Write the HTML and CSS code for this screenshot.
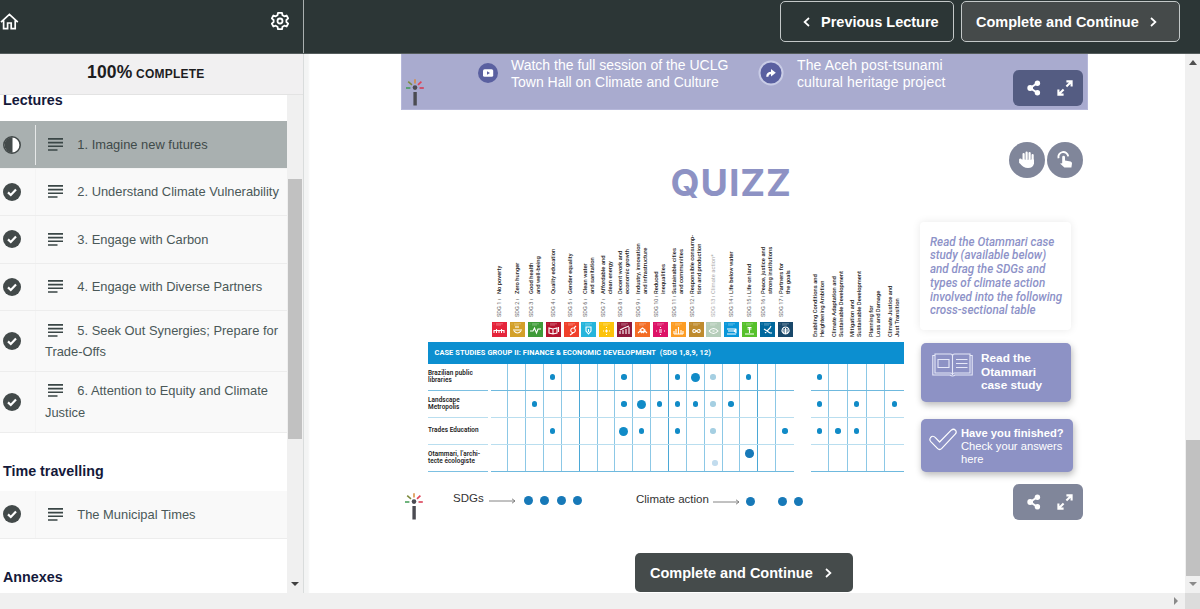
FILE: index.html
```html
<!DOCTYPE html>
<html lang="en">
<head>
    <meta charset="UTF-8">
    <meta name="viewport" content="width=device-width, initial-scale=1.0">
    <title>Imagine new futures</title>
    <link rel="stylesheet" href="styles.css">
</head>
<body>
    <!-- Shared icon shapes -->
    <svg class="icon-defs" width="0" height="0">
        <symbol id="icon-check" viewBox="0 0 18 18">
            <circle cx="9" cy="9" r="9" fill="#434a4a"/>
            <path d="M5 9.4 L7.8 12 L13 6.6" fill="none" stroke="#fff" stroke-width="2.2"/>
        </symbol>
        <symbol id="icon-half" viewBox="0 0 18 18">
            <circle cx="9" cy="9" r="8.2" fill="#fff" stroke="#434a4a" stroke-width="1.6"/>
            <path d="M9.5 1 A8 8 0 0 0 9.5 17 Z" fill="#434a4a"/>
        </symbol>
        <symbol id="icon-lines" viewBox="0 0 15 13">
            <path d="M0 .9H15M0 4.6H15M0 8.3H15M0 12H9.5" stroke="#3a4646" stroke-width="1.6"/>
        </symbol>
        <symbol id="icon-share" viewBox="0 0 14 16">
            <path d="M10.5 3 L3.2 8 L10.5 13" fill="none" stroke="#fff" stroke-width="2"/>
            <circle cx="10.4" cy="3.2" r="2.7" fill="#fff"/>
            <circle cx="3.2" cy="8" r="2.9" fill="#fff"/>
            <circle cx="10.4" cy="12.8" r="2.7" fill="#fff"/>
        </symbol>
        <symbol id="icon-expand" viewBox="0 0 16 16">
            <path d="M9.4 1.4H14.6V6.6M14.2 1.8L9.4 6.6M1.4 9.4V14.6H6.6M1.8 14.2L6.6 9.4" fill="none" stroke="#fff" stroke-width="2.1"/>
        </symbol>
        <symbol id="icon-wand" viewBox="0 0 18 27">
            <rect x="7.4" y="13" width="3.4" height="13.5" fill="#4b4b52"/>
            <circle cx="9" cy="8.6" r="2.3" fill="#4b4b52"/>
            <path d="M0 9H4.4" stroke="#3f9b52" stroke-width="1.5"/>
            <path d="M2.2 2.6L6 5.9" stroke="#7d8a3c" stroke-width="1.5"/>
            <path d="M9 .3V4.6" stroke="#d98a3a" stroke-width="1.5"/>
            <path d="M15.4 2.6L12 5.9" stroke="#e0455a" stroke-width="1.7"/>
            <path d="M13.5 9H17.8" stroke="#d8344c" stroke-width="1.5"/>
        </symbol>
        <symbol id="icon-arrow" viewBox="0 0 27 6">
            <path d="M0 3H26M23 .8L26 3L23 5.2" fill="none" stroke="#777" stroke-width=".9"/>
        </symbol>
        <symbol id="icon-next" viewBox="0 0 7 10">
            <path d="M1 1L5.4 5L1 9" fill="none" stroke="#fff" stroke-width="1.7"/>
        </symbol>
    </svg>

    <!-- Top bar -->
    <header class="topbar">
        <div class="topbar-tools">
            <svg width="19" height="17" viewBox="0 0 19 17" fill="none" stroke="#fff" stroke-width="1.7">
                <path d="M1 9.2L9.4 1.4L17.8 9.2M3.6 7.4V15.6H7.6V10H11.2V15.6H15.2V7.4"/>
            </svg>
            <svg width="18" height="20" viewBox="0 0 18 20" fill="none" stroke="#fff" stroke-width="1.8" stroke-linejoin="round">
                <path d="M7 1.8H11L11.5 4.3L13.3 5.3L15.6 4.5L17.2 7.4L15.4 9V11L17.2 12.6L15.6 15.5L13.3 14.7L11.5 15.7L11 18.2H7L6.5 15.7L4.7 14.7L2.4 15.5L.8 12.6L2.6 11V9L.8 7.4L2.4 4.5L4.7 5.3L6.5 4.3Z"/>
                <circle cx="9" cy="10" r="2.5"/>
            </svg>
        </div>
        <nav class="topbar-nav">
            <a class="nav-button"><svg class="flip" width="7" height="10"><use href="#icon-next"/></svg>Previous Lecture</a>
            <a class="nav-button nav-button-main">Complete and Continue<svg width="7" height="10"><use href="#icon-next"/></svg></a>
        </nav>
    </header>

    <div class="page">
        <!-- Course outline -->
        <aside class="sidebar">
            <div class="progress"><span class="progress-value">100%</span> COMPLETE</div>
            <div class="outline">
                <div class="sections">
                    <h2>Lectures</h2>
                    <ul>
                        <li class="lecture active">
                            <span class="status"><svg width="18" height="18"><use href="#icon-half"/></svg></span>
                            <span class="name"><svg class="lines" width="15" height="13"><use href="#icon-lines"/></svg>1. Imagine new futures</span>
                        </li>
                        <li class="lecture">
                            <span class="status"><svg width="18" height="18"><use href="#icon-check"/></svg></span>
                            <span class="name"><svg class="lines" width="15" height="13"><use href="#icon-lines"/></svg>2. Understand Climate Vulnerability</span>
                        </li>
                        <li class="lecture">
                            <span class="status"><svg width="18" height="18"><use href="#icon-check"/></svg></span>
                            <span class="name"><svg class="lines" width="15" height="13"><use href="#icon-lines"/></svg>3. Engage with Carbon</span>
                        </li>
                        <li class="lecture">
                            <span class="status"><svg width="18" height="18"><use href="#icon-check"/></svg></span>
                            <span class="name"><svg class="lines" width="15" height="13"><use href="#icon-lines"/></svg>4. Engage with Diverse Partners</span>
                        </li>
                        <li class="lecture tall">
                            <span class="status"><svg width="18" height="18"><use href="#icon-check"/></svg></span>
                            <span class="name"><svg class="lines" width="15" height="13"><use href="#icon-lines"/></svg>5. Seek Out Synergies; Prepare for<br>Trade-Offs</span>
                        </li>
                        <li class="lecture tall">
                            <span class="status"><svg width="18" height="18"><use href="#icon-check"/></svg></span>
                            <span class="name"><svg class="lines" width="15" height="13"><use href="#icon-lines"/></svg>6. Attention to Equity and Climate<br>Justice</span>
                        </li>
                    </ul>
                    <h2>Time travelling</h2>
                    <ul>
                        <li class="lecture">
                            <span class="status"><svg width="18" height="18"><use href="#icon-check"/></svg></span>
                            <span class="name"><svg class="lines" width="15" height="13"><use href="#icon-lines"/></svg>The Municipal Times</span>
                        </li>
                    </ul>
                    <h2>Annexes</h2>
                </div>
                <div class="scrollbar outline-scroll">
                    <div class="thumb"></div>
                    <div class="arrow-down dark"></div>
                </div>
            </div>
        </aside>

        <!-- Lecture content -->
        <main class="content">
            <section class="banner">
                <svg class="banner-wand" width="18" height="27"><use href="#icon-wand"/></svg>
                <a class="banner-link video">
                    <svg width="20" height="20" viewBox="0 0 20 20">
                        <circle cx="10" cy="10" r="10" fill="#5a60a0"/>
                        <rect x="5" y="6.2" width="10.2" height="7.6" rx="1.6" fill="#fff"/>
                        <path d="M9 8.3L12 10L9 11.7Z" fill="#5a60a0"/>
                    </svg>
                    <span>Watch the full session of the UCLG<br>Town Hall on Climate and Culture</span>
                </a>
                <a class="banner-link project">
                    <svg width="26" height="26" viewBox="0 0 26 26">
                        <circle cx="13" cy="13" r="11.5" fill="#5a60a0" stroke="#c9cce6" stroke-width="2"/>
                        <path d="M9.3 16.8C9.3 13.5 11 12.8 13.6 12.8" fill="none" stroke="#fff" stroke-width="2.2"/>
                        <path d="M13 9L17.8 12.8L13 16.4Z" fill="#fff"/>
                    </svg>
                    <span>The Aceh post-tsunami<br>cultural heritage project</span>
                </a>
                <div class="toolbar toolbar-blue">
                    <svg width="14" height="16"><use href="#icon-share"/></svg>
                    <svg width="16" height="16"><use href="#icon-expand"/></svg>
                </div>
            </section>

            <section class="quiz">
                <div class="hints">
                    <span class="hint">
                        <svg width="16" height="18" viewBox="0 0 16 18" fill="none" stroke="#fff" stroke-width="2.2" stroke-linecap="round">
                            <path d="M4.6 9V3M7.6 8V1.6M10.6 8V2M13.6 9V4"/>
                            <path d="M1.4 8.6V11.2" stroke-width="2.4"/>
                            <path d="M.4 8.5H15V12.5Q14 17 9 17Q4 17 .6 12Z" fill="#fff" stroke="none"/>
                        </svg>
                    </span>
                    <span class="hint">
                        <svg width="16" height="18" viewBox="0 0 16 18">
                            <path d="M1.6 7.2A4.9 4.9 0 1 1 11.2 5.4" fill="none" stroke="#fff" stroke-width="1.9"/>
                            <path d="M5.2 6.2A1.4 1.4 0 0 1 8 6.2V9.6L13.6 10.6Q15 11 15 12.4L14.4 16.6H7.4L3 12.6L5.2 12.2Z" fill="#fff"/>
                        </svg>
                    </span>
                </div>
                <h1>QUIZZ</h1>

                <div class="quiz-body">
                    <div class="chart">
                        <div class="chart-head">
                            <div class="goals" id="goals"></div>
                            <div class="actions" id="actions"></div>
                        </div>
                        <div class="chart-title">CASE STUDIES GROUP II: FINANCE &amp; ECONOMIC DEVELOPMENT&nbsp; (SDG 1,8,9, 12)</div>
                        <div class="chart-rows" id="rows"></div>
                    </div>

                    <div class="cards">
                        <div class="note"><p>Read the Otammari case<br>study (available below)<br>and drag the SDGs and<br>types of climate action<br>involved into the following<br>cross-sectional table</p></div>
                        <a class="card card-read">
                            <svg width="41" height="24" viewBox="0 0 41 24" fill="none" stroke="#e6e8f8" stroke-width="1.1">
                                <path d="M3 2.5H.8V22H18Q20.5 24 23 22H40.2V2.5H38"/>
                                <path d="M3 1H18.5Q20.5 1 20.5 3Q20.5 1 22.5 1H38V20H22.5Q20.5 20 20.5 22Q20.5 20 18.5 20H3ZM20.5 3V21"/>
                                <path d="M6 6.5H17V14.5H6ZM24 6.5H35.5M24 10.5H35.5M24 14.5H35.5"/>
                            </svg>
                            <span>Read the<br>Otammari<br>case study</span>
                        </a>
                        <a class="card card-check">
                            <svg width="28" height="23" viewBox="0 0 28 23" fill="none" stroke="#fff" stroke-width="1.2" stroke-linejoin="round">
                                <path d="M1.6 9.5Q3.8 7 6.4 9.6L10.6 14L22.2 2.2Q24.6 .2 26.6 2.4Q28 4.4 26.2 6.2L12.8 20.4Q10.6 22.6 8.4 20.4L1.8 13.6Q0 11.6 1.6 9.5Z"/>
                            </svg>
                            <span><b>Have you finished?</b><br>Check your answers<br>here</span>
                        </a>
                    </div>
                </div>

                <div class="legend">
                    <svg class="legend-wand" width="18" height="27"><use href="#icon-wand"/></svg>
                    <div class="legend-group sdgs">
                        <span class="legend-name">SDGs</span>
                        <svg width="27" height="6"><use href="#icon-arrow"/></svg>
                        <div class="answers">
                            <i class="answer"></i><i class="answer"></i><i class="answer"></i><i class="answer"></i>
                        </div>
                    </div>
                    <div class="legend-group climate">
                        <span class="legend-name">Climate action</span>
                        <svg width="27" height="6"><use href="#icon-arrow"/></svg>
                        <div class="answers">
                            <i class="answer"></i><i class="answer far"></i><i class="answer"></i>
                        </div>
                    </div>
                    <div class="toolbar">
                        <svg width="14" height="16"><use href="#icon-share"/></svg>
                        <svg width="16" height="16"><use href="#icon-expand"/></svg>
                    </div>
                </div>
            </section>

            <a class="continue">Complete and Continue<svg width="7" height="10"><use href="#icon-next"/></svg></a>
        </main>

        <div class="scrollbar content-scroll">
            <div class="arrow-up"></div>
            <div class="thumb"></div>
            <div class="arrow-down"></div>
        </div>
    </div>

    <footer class="bottom-scroll">
        <div class="arrow-right"></div>
        <div class="corner"></div>
    </footer>

    <script>
        // name, tile colour and glyph of each goal
        const goals = [
            ['No poverty', '#e5243b', 'M2 8v3M4.5 7v4M7 8v3M9.5 7v4M12 8v3M2 8.5h10'],
            ['Zero hunger', '#d3a029', 'M3 8h9M4 9q3.5 4 7 0M6 6v-2M8 6v-2'],
            ['Good health<br>and well-being', '#3f9b38', 'M2 9h3l1.5-3l2 5l1.5-4h3'],
            ['Quality education', '#b5152f', 'M3 6v5l4 1l4-1v-5l-4 1zM7 7v5M12.5 5v5'],
            ['Gender equality', '#f0402b', 'M9 6a2.3 2.3 0 1 0 .1 0M9 11l-3 2M10 6l2-2'],
            ['Clean water<br>and sanitation', '#26b5dc', 'M5 5h5v4l-2.5 3l-2.5-3zM7.5 7v3'],
            ['Affordable and<br>clean energy', '#fcc30b', 'M6 9h3M7.5 7.5v3M4 9h1M10 9h1M7.5 5v1M7.5 12v1'],
            ['Decent work and<br>economic growth', '#8f1a3c', 'M3 12v-3M6 12v-4M9 12v-5M12 12v-7M3 8l4-2l5-2'],
            ['Industry, innovation<br>and infrastructure', '#f36d25', 'M5 8l2.5-2l2.5 2l-2.5 2zM3 11l2-2l2 2M8 11l2-2l2 2'],
            ['Reduced<br>inequalities', '#dd1367', 'M6 8h3M6 10h3M3 9h1M11 9h1M7.5 5v1M7.5 12v1'],
            ['Sustainable cities<br>and communities', '#fd9d24', 'M3 12v-3M5 12v-5M7.5 12v-7M10 12v-4M12 12v-3M3 12h9'],
            ['Responsible consump-<br>tion and production', '#bf8b2e', 'M7.5 9c-5-5-5 5 0 0c5-5 5 5 0 0'],
            ['Climate action*', '#b5cdb9', 'M3 9q4.5-5 9 0q-4.5 5-9 0M6.5 9h2'],
            ['Life below water', '#0a97d9', 'M3 7h9M4 9h6l2-1.5v3l-2-1.5M3 12h9'],
            ['Life on land', '#56c02b', 'M7.5 11v-5M5.5 7h4M5.5 5.5h4M3 12h9'],
            ['Peace, justice and<br>strong institutions', '#00689d', 'M4 7l6 4M10 6l-5 5M10 6l1-2M10 11h2'],
            ['Partners for<br>the goals', '#19486a', 'M7.5 5a3.5 3.5 0 1 0 .1 0M5 8h5M5 10h5M7.5 6v6']
        ];

        const actions = [
            'Enabling Conditions and<br>Heightening Ambition',
            'Climate Adaptation and<br>Sustainable Development',
            'Mitigation and<br>Sustainable Development',
            'Planning for<br>Loss and Damage',
            'Climate Justice and<br>Just Transition'
        ];

        // s = small dot, b = big dot, l = light dot, d and m = dropped answers, . = empty
        const rows = [
            ['Brazilian public<br>libraries', '...s...s..sbl.s..', 's....'],
            ['Landscape<br>Metropolis', '..s....sbsssls...', 's.s.s'],
            ['Trades Education', '...s...bs.s.l...s', 'sss..'],
            ['Otammari, l’archi-<br>tecte écologiste', '............m.d..', '.....']
        ];

        document.getElementById('goals').innerHTML = goals.map(([name, color, glyph], i) => `
            <div class="goal ${i === 12 ? 'faded' : ''}">
                <div class="goal-label"><span class="goal-number">SDG ${i + 1} ı</span><span>${name}</span></div>
                <svg width="15" height="15" viewBox="0 0 15 15">
                    <rect width="15" height="15" fill="${color}"/>
                    <path d="M1.5 2h1M4 1.8h7M4 3h5" stroke="#fff" stroke-width=".6" opacity=".5"/>
                    <path d="${glyph}" fill="none" stroke="#fff" stroke-width="1.1"/>
                </svg>
            </div>`).join('');

        document.getElementById('actions').innerHTML = actions
            .map(name => `<div class="action-label">${name}</div>`).join('');

        const cells = marks => [...marks]
            .map(m => `<div class="cell">${m === '.' ? '' : `<i class="dot dot-${m}"></i>`}</div>`).join('');

        document.getElementById('rows').innerHTML = rows.map(([name, left, right]) => `
            <div class="row">
                <div class="row-name"><span>${name}</span></div>
                <div class="row-goals">${cells(left)}</div>
                <div class="row-actions">${cells(right)}</div>
            </div>`).join('');
    </script>
</body>
</html>
```
FILE: styles.css
```css
/* Page frame */
* {
    box-sizing: border-box;
}

body {
    margin: 0;
    height: 609px;
    display: flex;
    flex-direction: column;
    overflow: hidden;
    background-color: #fff;
    font-family: "Liberation Sans", Arial, sans-serif;
}

.icon-defs {
    position: absolute;
}

svg {
    flex-shrink: 0;
}

h1, h2, ul, p {
    margin: 0;
    padding: 0;
}

/* Top bar */
.topbar {
    display: flex;
    justify-content: space-between;
    height: 54px;
    flex-shrink: 0;
    background-color: #2c3636;
    border-bottom: 1px solid #555d5d;
}

.topbar-tools {
    display: flex;
    justify-content: space-between;
    align-items: center;
    width: 304px;
    padding: 0 14px 11px 0;
    border-right: 1px solid #a9afaf;
}

.topbar-nav {
    display: flex;
    gap: 7px;
    padding: 1px 20px 0 0;
}

.nav-button {
    display: flex;
    align-items: center;
    gap: 11px;
    width: 174px;
    height: 41px;
    padding-left: 22px;
    border: 1px solid #c3c8c8;
    border-radius: 5px;
    color: #fff;
    font-size: 14.5px;
    font-weight: bold;
    white-space: nowrap;
}

.nav-button-main {
    width: 219px;
    padding-left: 14px;
    background-color: #454a4a;
}

.flip {
    transform: scaleX(-1);
}

.page {
    display: flex;
    height: 539px;
}

/* Sidebar */
.sidebar {
    width: 304px;
    flex-shrink: 0;
    border-right: 1px solid #d9dcdc;
}

.progress {
    height: 41px;
    padding: 7px 0 0 87px;
    background-color: #f1f0f1;
    border-bottom: 1px solid #e3e3e3;
    color: #1d1d1f;
    font-size: 12px;
    font-weight: bold;
    letter-spacing: 0.2px;
    line-height: 22px;
}

.progress-value {
    font-size: 17.5px;
}

.outline {
    display: flex;
    height: 498px;
}

.sections {
    width: 287px;
}

.sections h2 {
    height: 58.4px;
    padding: 28px 0 0 3px;
    color: #14193a;
    font-size: 14.3px;
    line-height: 20px;
}

.sections h2:first-child {
    height: 26px;
    padding-top: 0;
    line-height: 11px;
}

.lecture {
    display: flex;
    height: 47.6px;
    background-color: #f9f9f9;
    border-bottom: 1px solid #ededed;
    color: #4a5858;
    font-size: 12.9px;
    line-height: 21.5px;
}

.lecture.tall {
    height: 60.6px;
}

.lecture.active {
    background-color: #a9b0b0;
    color: #3f4a4a;
    border-color: #f4f4f4;
}

.status {
    display: flex;
    align-items: center;
    width: 36px;
    padding-left: 3px;
    border-right: 1px solid #f4f4f4;
}

.active .status {
    margin: 4px 0 3px;
    border-color: #e6e8e8;
}

.name {
    align-self: center;
    padding-left: 9px;
    white-space: nowrap;
}

.lines {
    margin: 0 14.3px 0 3px;
    vertical-align: -2px;
}

/* Scrollbars */
.scrollbar {
    display: flex;
    flex-direction: column;
    align-items: center;
    background-color: #f0f0f0;
}

.thumb {
    width: 14px;
    background-color: #c1c1c1;
}

.outline-scroll {
    width: 16px;
    padding-top: 84px;
}

.outline-scroll .thumb {
    height: 260px;
    margin-bottom: 143px;
}

.content-scroll {
    width: 15px;
    padding-top: 6px;
}

.content-scroll .thumb {
    height: 136px;
    margin: 375px 0 6px;
}

.arrow-up, .arrow-down, .arrow-right {
    border: 4px solid transparent;
}

.arrow-up {
    border-top: 0;
    border-bottom: 5px solid #505050;
}

.arrow-down {
    border-bottom: 0;
    border-top: 4px solid #8a8a8a;
}

.arrow-down.dark {
    border-top-color: #404040;
}

.bottom-scroll {
    display: flex;
    justify-content: flex-end;
    align-items: center;
    height: 16px;
    background-color: #f0f0f0;
}

.arrow-right {
    margin-right: 7px;
    border-right: 0;
    border-left: 4px solid #8a8a8a;
}

.corner {
    width: 15px;
    height: 16px;
    background-color: #dcdcdc;
}

/* Content column */
.content {
    display: flex;
    flex-direction: column;
    width: 881px;
    padding-left: 97px;
    background: linear-gradient(to right, #f3f4f4 4px, #fff 6px);
}

.banner {
    display: flex;
    width: 687px;
    height: 56px;
    padding-left: 4px;
    background-color: #a9abcf;
    border: 1px solid #b6b8da;
    border-top: 0;
}

.banner-wand {
    margin-top: 25px;
}

.banner-link {
    display: flex;
    color: #fff;
    font-size: 14px;
    line-height: 16.5px;
    white-space: nowrap;
}

.banner-link span {
    margin-top: 3px;
}

.video {
    gap: 13px;
    margin-left: 54px;
    width: 280px;
}

.video svg {
    margin-top: 9px;
}

.project {
    gap: 13px;
    width: 255px;
    letter-spacing: 0.12px;
}

.project svg {
    margin-top: 6px;
}

.toolbar {
    display: flex;
    align-items: center;
    gap: 16px;
    width: 70px;
    height: 36px;
    padding-left: 14px;
    border-radius: 6px;
    background-color: #80869a;
}

.toolbar-blue {
    margin: 16px 4px 0 auto;
    background-color: #545c82;
}

/* Quiz slide */
.quiz {
    width: 687px;
    padding-top: 32px;
}

.hints {
    display: flex;
    justify-content: flex-end;
    gap: 2px;
    height: 20px;
    padding-right: 5px;
}

.hint {
    display: flex;
    justify-content: center;
    align-items: center;
    width: 36px;
    height: 36px;
    border-radius: 50%;
    background-color: #80869a;
}

.quiz h1 {
    height: 60px;
    padding-left: 269.5px;
    color: #8d92c4;
    font-family: Inter, "Liberation Sans", sans-serif;
    font-size: 37.5px;
    font-weight: 700;
    letter-spacing: 0.9px;
    line-height: 41px;
}

.quiz-body {
    display: flex;
    height: 262px;
    padding-left: 27px;
    gap: 16px;
}

/* Case study chart */
.chart {
    width: 476px;
    font-family: Roboto, "Liberation Sans", sans-serif;
    color: #222;
}

.chart-head {
    display: flex;
    justify-content: space-between;
    align-items: flex-end;
    height: 120px;
    padding: 0 0 5px 62.8px;
}

.goals {
    display: flex;
}

.goal {
    display: flex;
    flex-direction: column;
    align-items: center;
    gap: 5px;
    width: 17.85px;
}

/* Labels read from bottom to top */
.goal-label, .action-label {
    writing-mode: vertical-rl;
    transform: rotate(180deg);
    font-size: 5.8px;
    font-weight: 500;
    line-height: 7.2px;
    white-space: nowrap;
}

.goal-label {
    display: flex;
    height: 90px;
}

.goal-number {
    height: 22.5px;
    flex-shrink: 0;
    font-size: 5.6px;
    font-weight: 400;
    color: #666;
}

.faded .goal-label, .faded .goal-number {
    color: #aaa;
    font-weight: 400;
}

.actions {
    display: flex;
    width: 94px;
}

.action-label {
    width: 18.7px;
    padding: 0 2px;
}

.chart-title {
    height: 21.5px;
    padding-left: 6.5px;
    background-color: #0c8fd0;
    color: #fff;
    font-size: 7.4px;
    font-weight: 700;
    letter-spacing: 0.08px;
    line-height: 22px;
    white-space: nowrap;
}

.row {
    display: flex;
    height: 27px;
}

.row-name {
    display: flex;
    align-items: center;
    width: 60px;
    margin-right: 2.8px;
    padding-top: 1px;
    border-bottom: 1px solid #7cc0e2;
    font-size: 6.4px;
    font-weight: 600;
    letter-spacing: 0.06px;
    line-height: 7.5px;
    white-space: nowrap;
}

.row-goals, .row-actions {
    display: flex;
    border-bottom: 1px solid #6fb9de;
}

.row-actions {
    margin-left: 16.7px;
}

.row:nth-child(2) > div, .row:nth-child(3) > div {
    border-color: #b9deef;
}

.cell {
    display: flex;
    justify-content: center;
    align-items: center;
    width: 17.85px;
    padding-top: 1px;
    border-right: 1px solid #8cc8e6;
}

.cell:nth-child(5n) {
    border-color: #4ba8d6;
}

.row-actions .cell {
    width: 18.7px;
}

.cell:last-child {
    border-right: 0;
}

.dot {
    flex-shrink: 0;
    width: 5.4px;
    height: 5.4px;
    border-radius: 50%;
    background-color: #118bc7;
}

.dot-b {
    width: 9px;
    height: 9px;
}

.dot-l {
    background-color: #a5cfe2;
}

/* Answers already dropped by the learner */
.dot-d {
    width: 8.6px;
    height: 8.6px;
    margin: -9px 0 0 2px;
    background-color: #1779b8;
}

.dot-m {
    margin: 10px 0 0 4px;
    background-color: #c2dcee;
}

/* Cards beside the chart */
.note {
    width: 151px;
    height: 108px;
    padding: 13.5px 0 0 10px;
    border-radius: 4px;
    box-shadow: 0 0 8px rgba(0, 0, 0, 0.09);
    background-color: #fff;
}

.note p {
    width: 135px;
    color: #8d92c8;
    font-family: Roboto, "Liberation Sans", sans-serif;
    font-size: 12px;
    font-style: italic;
    font-weight: 500;
    line-height: 13.8px;
    white-space: nowrap;
    transform: scaleX(0.97);
    transform-origin: left;
}

.card {
    display: flex;
    margin-left: 1px;
    border-radius: 5px;
    background-color: #8d92c5;
    box-shadow: 1px 3px 7px rgba(0, 0, 0, 0.28);
    color: #fff;
    white-space: nowrap;
}

.card-read {
    gap: 8px;
    width: 150px;
    height: 59px;
    margin-top: 13px;
    padding: 9px 0 0 11px;
    font-size: 11.8px;
    font-weight: bold;
    line-height: 13.7px;
}

.card-read svg {
    margin-top: 1px;
}

.card-check {
    gap: 4px;
    width: 152px;
    height: 53px;
    margin-top: 17px;
    padding: 8px 0 0 8px;
    font-size: 11.2px;
    line-height: 13px;
}

.card-check svg {
    margin-top: 1px;
}

/* Legend under the chart */
.legend {
    display: flex;
    height: 36px;
    padding-left: 4px;
}

.legend-wand {
    margin-top: 9px;
}

.legend-group {
    display: flex;
    align-items: center;
    height: 17px;
    color: #333;
    font-size: 11.5px;
    white-space: nowrap;
}

.sdgs {
    width: 183px;
    gap: 5px;
    margin: 8px 0 0 30px;
}

.climate {
    width: 377px;
    gap: 4px;
    margin-top: 9px;
}

.legend-name {
    margin-bottom: 5px;
}

.answers {
    display: flex;
    gap: 7.6px;
    margin-left: 3px;
}

.climate .answers {
    gap: 7px;
    margin-left: 2px;
}

.answer {
    width: 9px;
    height: 9px;
    border-radius: 50%;
    background-color: #1779b8;
}

.answer.far {
    margin-left: 16.5px;
}

.continue {
    display: flex;
    align-items: center;
    gap: 12px;
    width: 218px;
    height: 39px;
    margin: 33px 0 0 234px;
    padding-left: 15px;
    border-radius: 5px;
    background-color: #454b4b;
    color: #fff;
    font-size: 14.5px;
    font-weight: bold;
    white-space: nowrap;
}
```
